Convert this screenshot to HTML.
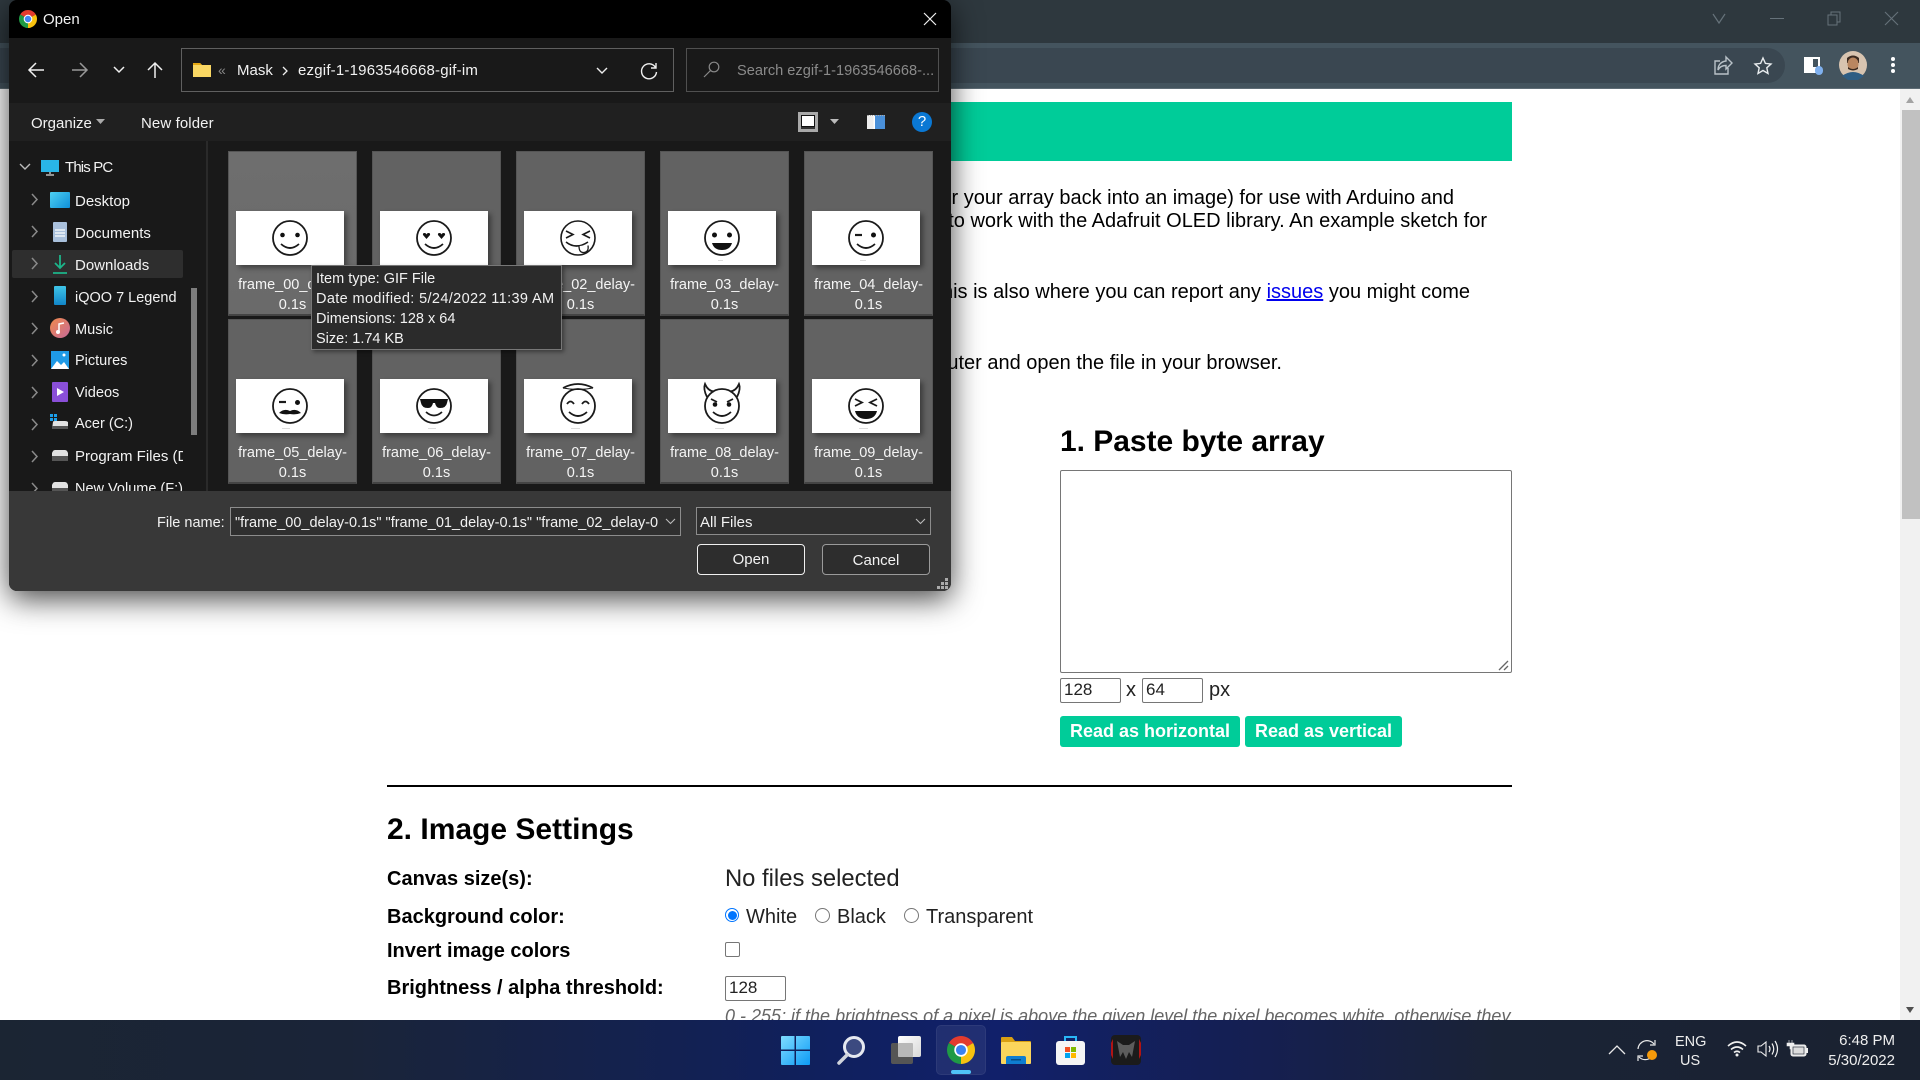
<!DOCTYPE html>
<html><head><meta charset="utf-8"><title>Open</title>
<style>
*{box-sizing:border-box}
html,body{margin:0;padding:0;width:1920px;height:1080px;overflow:hidden;background:#fff;font-family:"Liberation Sans",sans-serif}
.a{position:absolute}
.t{position:absolute;white-space:nowrap;line-height:20px;height:20px}
.p{font-size:20px;color:#000;margin-top:1px}
.lb{font-size:20px;font-weight:700;color:#000}
.d{color:#f2f2f2;font-size:15px;margin-top:1px}
.tile{position:absolute;width:129px;height:165px;background:#626262;border:1px solid #555;border-bottom:2px solid #444}
.tile.sel{background:linear-gradient(#6e6e6e,#6a6a6a)}
.tile svg{position:absolute;left:7px;top:59px;width:108px;height:54px;background:#fff;box-shadow:3px 3px 5px rgba(0,0,0,.4)}
.tile .n{position:absolute;left:0;width:100%;top:123px;text-align:center;color:#f5f5f5;font-size:14.500px;line-height:20px}
.nv{position:absolute;left:75px;color:#f2f2f2;font-size:15px;line-height:20px;white-space:nowrap;margin-top:1px}
.chev{position:absolute;left:31px}
.box{position:absolute;border:1px solid #767676;border-radius:2px;background:#fff;font-family:"Liberation Sans",sans-serif;font-size:17px;color:#222;padding-left:3px;line-height:22px}
.btn{position:absolute;background:#00cc99;border-radius:3px;color:#fff;font-weight:700;font-size:18px;line-height:31px;text-align:center}
svg{display:block;overflow:visible}
.ic{position:absolute}
</style></head><body>

<!-- browser chrome -->
<div class="a" style="left:0;top:0;width:1920px;height:44px;background:#2e383e"></div>
<div class="a" style="left:0;top:43px;width:1920px;height:46px;background:#44545e;border-bottom:1px solid #5e6c75"></div>
<div class="a" style="left:0;top:48px;width:1785px;height:35px;background:#3a4751;border-radius:0 18px 18px 0"></div>

<svg class="ic" style="left:1712px;top:11px" width="14" height="14"><path d="M1 3l6 9 6-9" fill="none" stroke="#66727a" stroke-width="1.200"/></svg>
<div class="a" style="left:1770px;top:18px;width:14px;height:1px;background:#66727a"></div>
<svg class="ic" style="left:1827px;top:11px" width="15" height="15"><path d="M1 4h9v10H1zM4 4V1h9v10h-3" fill="none" stroke="#66727a"/></svg>
<svg class="ic" style="left:1884px;top:11px" width="15" height="15"><path d="M1 1l13 13M14 1L1 14" stroke="#66727a" stroke-width="1.100"/></svg>

<svg class="ic" style="left:1713px;top:56px" width="20" height="20"><path d="M13 1l6 6-6 6V9.500C9 9.500 6.500 11 5 14c0-5 3-8.500 8-9zM15 12v6H2V5h5" fill="none" stroke="#b9c2c8" stroke-width="1.400"/></svg>
<svg class="ic" style="left:1753px;top:56px" width="20" height="20"><path d="M10 2l2.400 5.400 5.600.600-4.200 3.800 1.200 5.700-5-3-5 3 1.200-5.700L2 8l5.600-.6z" fill="none" stroke="#e8ecee" stroke-width="1.400"/></svg>
<div class="a" style="left:1804px;top:57px;width:16px;height:16px;background:#fff"></div>
<div class="a" style="left:1813px;top:59px;width:5px;height:8px;background:#44545e"></div>
<div class="a" style="left:1815px;top:66px;width:8px;height:9px;background:#7fb0ee;border-radius:4px"></div>
<svg class="ic" style="left:1839px;top:51px" width="28" height="28"><ellipse cx="14" cy="14" rx="14" ry="14" fill="#d8c4b0"/><path d="M8 7q6-5 12 0v5H8z" fill="#3b2a20"/><ellipse cx="14" cy="13" rx="5.500" ry="6.500" fill="#b98660"/><path d="M9 16q5 4 10 0v2q-5 3-10 0z" fill="#3b2a20"/><path d="M3 25q11-8 22 0l-6 4H9z" fill="#2f5d83"/></svg>
<div class="a" style="left:1891px;top:57px;width:4px;height:4px;background:#fff;border-radius:2px"></div>
<div class="a" style="left:1891px;top:63px;width:4px;height:4px;background:#fff;border-radius:2px"></div>
<div class="a" style="left:1891px;top:69px;width:4px;height:4px;background:#fff;border-radius:2px"></div>

<!-- page -->
<div class="a" style="left:387px;top:102px;width:1125px;height:59px;background:#00cc99"></div>
<div class="t p" style="right:466px;top:187px">image2cpp is a simple tool to change images into byte arrays (or your array back into an image) for use with Arduino and</div>
<div class="t p" style="right:433px;top:210px">(monochrome) displays such as OLEDs. It was originally made to work with the Adafruit OLED library. An example sketch for</div>
<div class="t p" style="right:450px;top:281px">The source code is available on GitHub, this is also where you can report any <a href="#" style="color:#00e">issues</a> you might come</div>
<div class="t p" style="right:638px;top:352px">You can also download it to your computer and open the file in your browser.</div>

<div class="t" style="left:1060px;top:432px;font-size:30px;font-weight:700;line-height:20px;color:#000;letter-spacing:-.03px">1. Paste byte array</div>
<div class="a" style="left:1060px;top:470px;width:452px;height:203px;border:1px solid #767676;border-radius:2px;background:#fff"></div>
<svg class="ic" style="left:1498px;top:660px" width="12" height="12"><path d="M1 10l9-9M6 10l4-4" stroke="#666" stroke-width="1.300"/></svg>
<div class="box" style="left:1060px;top:678px;width:61px;height:25px">128</div>
<div class="t" style="left:1126px;top:680px;font-size:20px;color:#222">x</div>
<div class="box" style="left:1142px;top:678px;width:61px;height:25px">64</div>
<div class="t" style="left:1209px;top:680px;font-size:20px;color:#222">px</div>
<div class="btn" style="left:1060px;top:716px;width:180px;height:31px">Read as horizontal</div>
<div class="btn" style="left:1245px;top:716px;width:157px;height:31px">Read as vertical</div>

<div class="a" style="left:387px;top:785px;width:1125px;height:2px;background:#000"></div>
<div class="t" style="left:387px;top:820px;font-size:30px;font-weight:700;color:#000">2. Image Settings</div>
<div class="t lb" style="left:387px;top:869px">Canvas size(s):</div>
<div class="t" style="left:725px;top:869px;font-size:23.800px;color:#222">No files selected</div>
<div class="t lb" style="left:387px;top:907px">Background color:</div>
<div class="a" style="left:725px;top:908px;width:14px;height:14px;border-radius:50%;border:1.500px solid #0075ff;background:#fff"></div>
<div class="a" style="left:727.500px;top:910.500px;width:9px;height:9px;border-radius:50%;background:#0075ff"></div>
<div class="t" style="left:746px;top:907px;font-size:20px;color:#222">White</div>
<div class="a" style="left:815px;top:908px;width:15px;height:15px;border-radius:50%;border:1px solid #767676;background:#fff"></div>
<div class="t" style="left:837px;top:907px;font-size:20px;color:#222">Black</div>
<div class="a" style="left:904px;top:908px;width:15px;height:15px;border-radius:50%;border:1px solid #767676;background:#fff"></div>
<div class="t" style="left:926px;top:907px;font-size:20px;color:#222">Transparent</div>
<div class="t lb" style="left:387px;top:941px">Invert image colors</div>
<div class="a" style="left:725px;top:942px;width:15px;height:15px;border-radius:2px;border:1px solid #767676;background:#fff"></div>
<div class="t lb" style="left:387px;top:978px">Brightness / alpha threshold:</div>
<div class="box" style="left:725px;top:976px;width:61px;height:25px">128</div>
<div class="t" style="left:725px;top:1006px;font-size:18px;font-style:italic;color:#666">0 - 255; if the brightness of a pixel is above the given level the pixel becomes white, otherwise they</div>

<!-- scrollbar -->
<div class="a" style="left:1900px;top:89px;width:20px;height:931px;background:#f1f1f1"></div>
<div class="a" style="left:1902px;top:110px;width:18px;height:409px;background:#c1c1c1"></div>
<svg class="ic" style="left:1905px;top:96px" width="10" height="8"><path d="M5 1l4 6H1z" fill="#a3a3a3"/></svg>
<svg class="ic" style="left:1905px;top:1006px" width="10" height="8"><path d="M5 7L9 1H1z" fill="#505050"/></svg>

<!-- dialog -->
<div class="a" style="left:9px;top:0;width:942px;height:591px;border-radius:8px;box-shadow:0 8px 30px rgba(0,0,0,.72);background:#191919;overflow:hidden">
  <div class="a" style="left:0;top:0;width:942px;height:38px;background:#000"></div>
  <div class="a" style="left:0;top:103px;width:942px;height:38px;background:#202020"></div>
  <div class="a" style="left:0;top:491px;width:942px;height:100px;background:#383838"></div>
</div>

<svg class="ic" style="left:19px;top:10px" width="18" height="18" viewBox="-10 -10 20 20"><path d="M0 0L-8.660-5A10 10 0 0 1 8.660-5Z" fill="#e33b2e"/><path d="M0 0L8.660-5A10 10 0 0 1 0 10Z" fill="#f8c20f"/><path d="M0 0L0 10A10 10 0 0 1-8.660-5Z" fill="#1f9a45"/><circle r="4.800" fill="#fff"/><circle r="3.600" fill="#4285f4"/></svg>
<div class="t d" style="left:43px;top:9px">Open</div>
<svg class="ic" style="left:923px;top:12px" width="14" height="14"><path d="M1 1l12 12M13 1L1 13" stroke="#f0f0f0" stroke-width="1.200"/></svg>

<!-- nav -->
<svg class="ic" style="left:27px;top:61px" width="18" height="18"><path d="M2 9h15M9 2L2 9l7 7" fill="none" stroke="#f0f0f0" stroke-width="1.500"/></svg>
<svg class="ic" style="left:71px;top:61px" width="18" height="18"><path d="M1 9h15M9 2l7 7-7 7" fill="none" stroke="#999" stroke-width="1.500"/></svg>
<svg class="ic" style="left:112px;top:65px" width="14" height="10"><path d="M2 2l5 5 5-5" fill="none" stroke="#f0f0f0" stroke-width="1.500"/></svg>
<svg class="ic" style="left:146px;top:61px" width="18" height="18"><path d="M9 17V2M2 9l7-7 7 7" fill="none" stroke="#f0f0f0" stroke-width="1.500"/></svg>
<div class="a" style="left:181px;top:48px;width:493px;height:44px;border:1px solid #606060"></div>
<svg class="ic" style="left:193px;top:62px" width="18" height="15"><path d="M0 1h7l2 2h9v12H0z" fill="#f9d763"/><path d="M0 1h7l2 2H0z" fill="#e5a712"/></svg>
<div class="t" style="left:218px;top:60px;color:#888;font-size:14px">«</div>
<div class="t d" style="left:237px;top:60px">Mask</div>
<svg class="ic" style="left:281px;top:66px" width="8" height="10"><path d="M2 1l4 4-4 4" fill="none" stroke="#eee" stroke-width="1.300"/></svg>
<div class="t d" style="left:298px;top:60px;letter-spacing:.2px">ezgif-1-1963546668-gif-im</div>
<svg class="ic" style="left:595px;top:66px" width="14" height="10"><path d="M2 2l5 5 5-5" fill="none" stroke="#eee" stroke-width="1.400"/></svg>
<svg class="ic" style="left:640px;top:62px" width="18" height="18"><path d="M15.500 5.500A7.500 7.500 0 1 0 16.500 10M16 1v5h-5" fill="none" stroke="#f0f0f0" stroke-width="1.400"/></svg>
<div class="a" style="left:686px;top:48px;width:253px;height:44px;border:1px solid #505050"></div>
<svg class="ic" style="left:703px;top:61px" width="17" height="17"><circle cx="11" cy="6" r="4.800" fill="none" stroke="#888" stroke-width="1.200"/><path d="M7.500 9.500L1 16" stroke="#888" stroke-width="1.200"/></svg>
<div class="t" style="left:737px;top:61px;color:#8a8a8a;font-size:14.600px">Search ezgif-1-1963546668-...</div>

<!-- toolbar -->
<div class="t d" style="left:31px;top:113px">Organize</div>
<svg class="ic" style="left:96px;top:119px" width="9" height="6"><path d="M0 0h9L4.500 5z" fill="#aaa"/></svg>
<div class="t d" style="left:141px;top:113px;letter-spacing:.1px">New folder</div>
<div class="a" style="left:798px;top:112px;width:20px;height:20px;background:#a9a9a9"></div>
<div class="a" style="left:801px;top:115px;width:14px;height:12px;background:#fff;border:1px solid #111;box-shadow:0 2px 0 #333"></div>
<svg class="ic" style="left:830px;top:119px" width="9" height="6"><path d="M0 0h9L4.500 5z" fill="#bbb"/></svg>
<div class="a" style="left:867px;top:115px;width:18px;height:14px;background:linear-gradient(90deg,#eee 0,#eee 35%,#fff 35%,#fff 45%,#4a90d9 45%);border-top:1px dotted #aaa"></div>
<div class="a" style="left:912px;top:112px;width:20px;height:20px;border-radius:50%;background:#0a78d4;color:#fff;font-size:15px;line-height:20px;text-align:center">?</div>

<!-- nav tree -->
<div class="a" style="left:12px;top:250px;width:171px;height:28px;background:#2e2e2e;border-radius:2px"></div>
<div class="a" style="left:206px;top:141px;width:2px;height:350px;background:#2a2a2a"></div>
<div class="a" style="left:191px;top:288px;width:6px;height:147px;background:#7d7d7d"></div>
<svg class="ic" style="left:19px;top:163px" width="12" height="9"><path d="M1 1l5 5 5-5" fill="none" stroke="#bbb" stroke-width="1.400"/></svg>
<svg class="ic" style="left:41px;top:160px" width="18" height="16"><rect x="0" y="0" width="18" height="12" fill="#29b6e8"/><path d="M9 12v2M5 15h8" stroke="#bbb" stroke-width="1.500"/></svg>
<div class="nv" style="left:65px;top:157px;font-size:15px;letter-spacing:-.85px">This PC</div>

<svg class="chev" style="top:193px" width="8" height="13"><path d="M1 1l5 5.500L1 12" fill="none" stroke="#8a8a8a" stroke-width="1.500"/></svg>
<div class="a" style="left:50px;top:192px;width:20px;height:16px;background:linear-gradient(135deg,#4dd0f2,#0f8fd8);border-radius:1px"></div>
<div class="nv" style="top:191px">Desktop</div>

<svg class="chev" style="top:225px" width="8" height="13"><path d="M1 1l5 5.500L1 12" fill="none" stroke="#8a8a8a" stroke-width="1.500"/></svg>
<svg class="ic" style="left:53px;top:222px" width="14" height="20"><rect width="14" height="20" rx="1" fill="#a9c0dc"/><path d="M2 8h10M2 11h10M2 14h10" stroke="#fff" stroke-width="1.200"/></svg>
<div class="nv" style="top:223px">Documents</div>

<svg class="chev" style="top:257px" width="8" height="13"><path d="M1 1l5 5.500L1 12" fill="none" stroke="#8a8a8a" stroke-width="1.500"/></svg>
<svg class="ic" style="left:53px;top:254px" width="14" height="20"><path d="M7 1v13M2 9l5 5 5-5M0 19h14" fill="none" stroke="#1cb58a" stroke-width="1.800"/></svg>
<div class="nv" style="top:255px">Downloads</div>

<svg class="chev" style="top:290px" width="8" height="13"><path d="M1 1l5 5.500L1 12" fill="none" stroke="#8a8a8a" stroke-width="1.500"/></svg>
<div class="a" style="left:54px;top:286px;width:12px;height:19px;background:linear-gradient(#3fc5e8,#1186c9);border-radius:1px"></div>
<div class="nv" style="top:287px;font-size:14.500px">iQOO 7 Legend</div>

<svg class="chev" style="top:322px" width="8" height="13"><path d="M1 1l5 5.500L1 12" fill="none" stroke="#8a8a8a" stroke-width="1.500"/></svg>
<div class="a" style="left:50px;top:318px;width:20px;height:20px;border-radius:50%;background:linear-gradient(135deg,#f08a4b,#c76a9a)"></div>
<svg class="ic" style="left:56px;top:322px" width="9" height="12"><path d="M3 10V2l5-1" fill="none" stroke="#fff" stroke-width="1.500"/><circle cx="2" cy="10" r="2" fill="#fff"/></svg>
<div class="nv" style="top:319px;font-size:14.600px">Music</div>

<svg class="chev" style="top:354px" width="8" height="13"><path d="M1 1l5 5.500L1 12" fill="none" stroke="#8a8a8a" stroke-width="1.500"/></svg>
<svg class="ic" style="left:51px;top:351px" width="18" height="18"><rect width="18" height="18" fill="#1f9ae6"/><path d="M0 18l6-8 4 4 3-3 5 7z" fill="#fff"/><circle cx="13" cy="4" r="1.500" fill="#fff"/></svg>
<div class="nv" style="top:350px;font-size:14.500px">Pictures</div>

<svg class="chev" style="top:386px" width="8" height="13"><path d="M1 1l5 5.500L1 12" fill="none" stroke="#8a8a8a" stroke-width="1.500"/></svg>
<svg class="ic" style="left:52px;top:382px" width="16" height="20"><rect width="16" height="20" rx="1" fill="#8a4fd8"/><path d="M5 6l7 4-7 4z" fill="#fff"/></svg>
<div class="nv" style="top:382px;font-size:14.600px">Videos</div>

<svg class="chev" style="top:418px" width="8" height="13"><path d="M1 1l5 5.500L1 12" fill="none" stroke="#8a8a8a" stroke-width="1.500"/></svg>
<svg class="ic" style="left:50px;top:414px" width="20" height="16"><path d="M0 0h3v3H0zM4 0h3v3H4zM0 4h3v3H0zM4 4h3v3H4z" fill="#1b9de8"/><path d="M3 8q0-1 2-1h10q2 0 3 1v7H2z" fill="#e2e2e2"/><rect x="2" y="12" width="16" height="3" fill="#555"/></svg>
<div class="nv" style="top:413px;font-size:14.500px">Acer (C:)</div>

<svg class="chev" style="top:450px" width="8" height="13"><path d="M1 1l5 5.500L1 12" fill="none" stroke="#8a8a8a" stroke-width="1.500"/></svg>
<svg class="ic" style="left:51px;top:450px" width="18" height="11"><path d="M1 3q1-3 3-3h10q2 0 3 3v8H1z" fill="#e2e2e2"/><rect x="1" y="6" width="16" height="5" fill="#555"/></svg>
<div class="nv" style="top:446px;width:108px;overflow:hidden">Program Files (D:)</div>

<div class="a" style="left:0;top:478px;width:206px;height:13px;overflow:hidden">
  <svg class="chev" style="top:4px" width="8" height="13"><path d="M1 1l5 5.500L1 12" fill="none" stroke="#8a8a8a" stroke-width="1.500"/></svg>
  <svg class="ic" style="left:51px;top:4px" width="18" height="11"><path d="M1 3q1-3 3-3h10q2 0 3 3v8H1z" fill="#e2e2e2"/><rect x="1" y="6" width="16" height="5" fill="#555"/></svg>
  <div class="nv" style="top:0;width:108px;overflow:hidden;font-size:14.500px">New Volume (F:)</div>
</div>

<!-- tiles -->
<div class="tile sel" style="left:228px;top:151px"><svg viewBox="0 0 108 54"><g transform="translate(54,27)" fill="none" stroke="#1a1a1a" stroke-width="1.800"><circle r="17"/><circle cx="-7.500" cy="-3" r="2.300" fill="#111" stroke="none"/><circle cx="7.500" cy="-3" r="2.300" fill="#111" stroke="none"/><path d="M-9 6Q0 14 9 6"/></g></svg><div class="n">frame_00_delay-<br>0.1s</div></div>
<div class="tile" style="left:372px;top:151px"><svg viewBox="0 0 108 54"><g transform="translate(54,27)" fill="none" stroke="#1a1a1a" stroke-width="1.800"><circle r="17"/><path d="M-7.500 1l-3.500-4q-.5-2 1.500-2 1.500 0 2 1.500.5-1.500 2-1.500 2 0 1.500 2zM7.500 1L4 -3q-.5-2 1.500-2 1.500 0 2 1.500.5-1.500 2-1.500 2 0 1.500 2z" fill="#111" stroke="none"/><path d="M-9 6Q0 14 9 6"/></g></svg><div class="n">frame_01_delay-<br>0.1s</div></div>
<div class="tile" style="left:516px;top:151px"><svg viewBox="0 0 108 54"><g transform="translate(54,27)" fill="none" stroke="#1a1a1a" stroke-width="1.600"><circle r="17"/><path d="M-12-7l7 3.500-7 3.500M12-7l-7 3.500 7 3.500M-12 4Q-2 12 10 4"/><path d="M1 8q0 7 5 6.500t4-7" fill="#fff" stroke="#1a1a1a" stroke-width="1.300"/></g></svg><div class="n">frame_02_delay-<br>0.1s</div></div>
<div class="tile" style="left:660px;top:151px"><svg viewBox="0 0 108 54"><g transform="translate(54,27)" fill="none" stroke="#1a1a1a" stroke-width="1.800"><circle r="17"/><circle cx="-7.500" cy="-3" r="2.500" fill="#111" stroke="none"/><circle cx="7.500" cy="-3" r="2.500" fill="#111" stroke="none"/><path d="M-10 5H10Q8 12 0 12T-10 5Z" fill="#111" stroke="none"/></g><rect x="50" y="49" width="5" height="1" fill="#ddd"/></svg><div class="n">frame_03_delay-<br>0.1s</div></div>
<div class="tile" style="left:804px;top:151px"><svg viewBox="0 0 108 54"><g transform="translate(54,27)" fill="none" stroke="#1a1a1a" stroke-width="1.800"><circle r="17"/><path d="M-11-3H-4" stroke-width="2.200"/><circle cx="7.500" cy="-3" r="2.500" fill="#111" stroke="none"/><path d="M-9 6Q0 14 9 6"/></g><rect x="48" y="49" width="6" height="1" fill="#ddd"/></svg><div class="n">frame_04_delay-<br>0.1s</div></div>

<div class="tile" style="left:228px;top:319px"><svg viewBox="0 0 108 54"><g transform="translate(54,27)" fill="none" stroke="#1a1a1a" stroke-width="1.800"><circle r="17"/><path d="M-11-4H-4" stroke-width="2.200"/><circle cx="7.500" cy="-3.500" r="2.500" fill="#111" stroke="none"/><path d="M-11 7Q-6 2 0 5 6 2 11 7 6 9 0 8-6 9-11 7Z" fill="#111" stroke="none"/></g><rect x="46" y="49" width="8" height="1" fill="#ddd"/></svg><div class="n">frame_05_delay-<br>0.1s</div></div>
<div class="tile" style="left:372px;top:319px"><svg viewBox="0 0 108 54"><g transform="translate(54,27)" fill="none" stroke="#1a1a1a" stroke-width="1.800"><circle r="17"/><path d="M-14-7H14L13-3Q12 2 6 2 2 2 1-3H-1Q-2 2-6 2-12 2-13-3Z" fill="#111" stroke="none"/><path d="M-8 6Q0 13 8 6"/></g><rect x="48" y="49" width="8" height="1" fill="#ddd"/></svg><div class="n">frame_06_delay-<br>0.1s</div></div>
<div class="tile" style="left:516px;top:319px"><svg viewBox="0 0 108 54"><g transform="translate(54,27)" fill="none" stroke="#1a1a1a" stroke-width="1.800"><circle r="17"/><path d="M-15-18Q0-26 15-18" stroke-width="1.800"/><path d="M-15-18Q0-15 15-18" stroke-width="1"/><path d="M-11-2Q-7.500-7-4-2M4-2Q7.500-7 11-2M-9 6Q0 14 9 6"/></g><rect x="47" y="49" width="9" height="1" fill="#ddd"/></svg><div class="n">frame_07_delay-<br>0.1s</div></div>
<div class="tile" style="left:660px;top:319px"><svg viewBox="0 0 108 54"><g transform="translate(54,27)" fill="none" stroke="#1a1a1a" stroke-width="1.800"><circle r="17"/><path d="M-15-9Q-19-17-17-22-14-15-8-14.500M15-9Q19-17 17-22 14-15 8-14.500"/><path d="M-11-7l6 3M11-7l-6 3"/><circle cx="-7" cy="-1.500" r="2.300" fill="#111" stroke="none"/><circle cx="7" cy="-1.500" r="2.300" fill="#111" stroke="none"/><path d="M-9 6Q0 14 9 6"/></g><rect x="47" y="49" width="9" height="1" fill="#ddd"/></svg><div class="n">frame_08_delay-<br>0.1s</div></div>
<div class="tile" style="left:804px;top:319px"><svg viewBox="0 0 108 54"><g transform="translate(54,27)" fill="none" stroke="#1a1a1a" stroke-width="1.800"><circle r="17"/><path d="M-11-7l7 3.500-7 3.500M11-7l-7 3.500 7 3.500"/><path d="M-11 5H11Q9 13 0 13T-11 5Z" fill="#111" stroke="none"/></g><rect x="47" y="49" width="9" height="1" fill="#ddd"/></svg><div class="n">frame_09_delay-<br>0.1s</div></div>

<!-- tooltip -->
<div class="a" style="left:311px;top:265px;width:251px;height:85px;background:#2b2b2b;border:1px solid #777;box-shadow:2px 2px 4px rgba(0,0,0,.4)"></div>
<div class="t d" style="left:316px;top:268px;font-size:14.500px">Item type: GIF File</div>
<div class="t d" style="left:316px;top:288px;font-size:14.500px;letter-spacing:.37px">Date modified: 5/24/2022 11:39 AM</div>
<div class="t d" style="left:316px;top:308px;font-size:14.500px">Dimensions: 128 x 64</div>
<div class="t d" style="left:316px;top:328px;font-size:14.500px">Size: 1.74 KB</div>

<!-- bottom -->
<div class="t d" style="left:157px;top:512px;font-size:14.500px">File name:</div>
<div class="a" style="left:230px;top:507px;width:451px;height:29px;border:1px solid #8c8c8c;background:#2f2f2f;overflow:hidden">
  <div class="t d" style="left:4px;top:4px;font-size:14.500px">"frame_00_delay-0.1s" "frame_01_delay-0.1s" "frame_02_delay-0</div>
  <div class="a" style="right:0;top:0;width:20px;height:27px;background:#2f2f2f"></div>
</div>
<svg class="ic" style="left:665px;top:518px" width="11" height="7"><path d="M1 1l4.500 4.500L10 1" fill="none" stroke="#bbb" stroke-width="1.100"/></svg>
<div class="a" style="left:696px;top:507px;width:235px;height:28px;border:1px solid #8c8c8c;background:#2f2f2f"></div>
<div class="t d" style="left:700px;top:512px">All Files</div>
<svg class="ic" style="left:915px;top:518px" width="11" height="7"><path d="M1 1l4.500 4.500L10 1" fill="none" stroke="#bbb" stroke-width="1.100"/></svg>
<div class="a d" style="left:697px;top:543px;width:108px;height:31px;border:1.500px solid #f0f0f0;border-radius:4px;background:#2d2d2d;text-align:center;line-height:30px">Open</div>
<div class="a d" style="left:822px;top:543px;width:108px;height:31px;border:1px solid #9a9a9a;border-radius:4px;background:#2d2d2d;text-align:center;line-height:31px">Cancel</div>
<svg class="ic" style="left:937px;top:578px" width="12" height="12"><path d="M8 0h3v3H8zM4 4h3v3H4zM8 4h3v3H8zM0 8h3v3H0zM4 8h3v3H4zM8 8h3v3H8z" fill="#aaa"/></svg>

<!-- taskbar -->
<div class="a" style="left:0;top:1020px;width:1920px;height:60px;background:linear-gradient(90deg,#1b2533 0,#1a2438 18%,#10205c 42%,#11206a 52%,#151f50 66%,#1a2336 78%,#1a2230 100%)"></div>
<svg class="ic" style="left:781px;top:1036px" width="29" height="29"><defs><linearGradient id="w" x1="0" y1="0" x2="1" y2="1"><stop offset="0" stop-color="#7fdcff"/><stop offset="1" stop-color="#0d9bf5"/></linearGradient></defs><path d="M0 1q0-1 1-1h12.500v13.500H0zM15 0h13q1 0 1 1v12.500H15zM0 15h13.500v14H1q-1 0-1-1zM15 15h14v13q0 1-1 1H15z" fill="url(#w)"/></svg>
<svg class="ic" style="left:837px;top:1036px" width="28" height="29"><circle cx="17" cy="11" r="9.500" fill="#3c4a80" stroke="#e6e9f0" stroke-width="3"/><path d="M10 19l-8 8" stroke="#d0d4dc" stroke-width="3.500" stroke-linecap="round"/></svg>
<div class="a" style="left:891px;top:1043px;width:22px;height:21px;background:#555;border-radius:2px"></div>
<div class="a" style="left:898px;top:1036px;width:23px;height:21px;background:linear-gradient(135deg,#fff,#d8d8d8);border-radius:2px"></div>
<div class="a" style="left:898px;top:1043px;width:15px;height:14px;background:#b8b8b8;border-radius:1px"></div>
<div class="a" style="left:936px;top:1025px;width:50px;height:50px;background:rgba(255,255,255,.07);border:1px solid rgba(255,255,255,.05);border-radius:5px"></div>
<svg class="ic" style="left:947px;top:1036px" width="28" height="28" viewBox="-10 -10 20 20"><path d="M0 0L-8.660-5A10 10 0 0 1 8.660-5Z" fill="#e33b2e"/><path d="M0 0L8.660-5A10 10 0 0 1 0 10Z" fill="#f8c20f"/><path d="M0 0L0 10A10 10 0 0 1-8.660-5Z" fill="#1f9a45"/><circle r="4.800" fill="#fff"/><circle r="3.600" fill="#3b82f0"/></svg>
<div class="a" style="left:951px;top:1070px;width:20px;height:4px;background:#4fc3f7;border-radius:2px"></div>
<svg class="ic" style="left:1001px;top:1037px" width="30" height="27"><path d="M0 1q0-1 1-1h10l3 4h15q1 0 1 1v4H0z" fill="#d99f12"/><rect y="5" width="30" height="22" rx="1" fill="#fbd55c"/><path d="M5 27v-6q0-2 2-2h16q2 0 2 2v6z" fill="#0f7ed1"/><rect x="10" y="22" width="10" height="1.500" fill="#064e87"/></svg>
<svg class="ic" style="left:1056px;top:1035px" width="29" height="30"><path d="M9 7V2h11v5" fill="none" stroke="#29b6f6" stroke-width="2"/><rect y="6" width="29" height="24" rx="3" fill="#f5f5f5"/><rect x="9" y="12" width="5" height="5" fill="#f25022"/><rect x="15" y="12" width="5" height="5" fill="#7fba00"/><rect x="9" y="18" width="5" height="5" fill="#00a4ef"/><rect x="15" y="18" width="5" height="5" fill="#ffb900"/></svg>
<svg class="ic" style="left:1111px;top:1035px" width="30" height="30"><rect width="30" height="30" rx="4" fill="#1b1b1b"/><path d="M0 8l2-4v20l-2-4zM30 8l-2-4v20l2-4z" fill="#b01414"/><path d="M6 6l6 4h6l6-4-3 16-3-5-3 7-3-7-3 5z" fill="#5c5c5c"/></svg>

<svg class="ic" style="left:1608px;top:1044px" width="18" height="11"><path d="M1 10l8-8 8 8" fill="none" stroke="#e8e8e8" stroke-width="1.300"/></svg>
<svg class="ic" style="left:1636px;top:1039px" width="22" height="24"><path d="M2 10A9 9 0 0 1 18 5M19 1v5h-5M18 14A9 9 0 0 1 3 18M2 22v-5h5" fill="none" stroke="#e8e8e8" stroke-width="1.200"/><circle cx="16" cy="16" r="5" fill="#f59a0b"/></svg>
<div class="t" style="left:1675px;top:1032px;color:#eee;font-size:14.500px">ENG</div>
<div class="t" style="left:1680px;top:1051px;color:#eee;font-size:14.500px">US</div>
<svg class="ic" style="left:1727px;top:1040px" width="20" height="17"><path d="M1 6q9-8 18 0M4 9.500q6-5 12 0M7 12.500q3-2.500 6 0" fill="none" stroke="#f0f0f0" stroke-width="1.600"/><circle cx="10" cy="15" r="1.500" fill="#f0f0f0"/></svg>
<svg class="ic" style="left:1757px;top:1040px" width="21" height="18"><path d="M1 6h3l5-4v14l-5-4H1z" fill="none" stroke="#f0f0f0" stroke-width="1.100"/><path d="M12 6q2 3 0 6M15 3.500q3.500 5.500 0 11M18 1q5 8 0 16" fill="none" stroke="#f0f0f0" stroke-width="1.200"/></svg>
<svg class="ic" style="left:1787px;top:1040px" width="21" height="17"><path d="M2 0v3M5 0v3M0 3h7v3H5v3H3V6H0z" fill="#f0f0f0" stroke="#f0f0f0" stroke-width=".6"/><rect x="4" y="5" width="15" height="11" rx="2" fill="#e8e8e8" stroke="#f0f0f0"/><rect x="6" y="7" width="11" height="7" fill="#ddd" stroke="#1a2230" stroke-width=".6"/><rect x="19" y="8" width="2" height="5" fill="#f0f0f0"/></svg>
<div class="t" style="right:25px;top:1031px;color:#eee;font-size:15px">6:48 PM</div>
<div class="t" style="right:25px;top:1051px;color:#eee;font-size:15px">5/30/2022</div>
</body></html>
